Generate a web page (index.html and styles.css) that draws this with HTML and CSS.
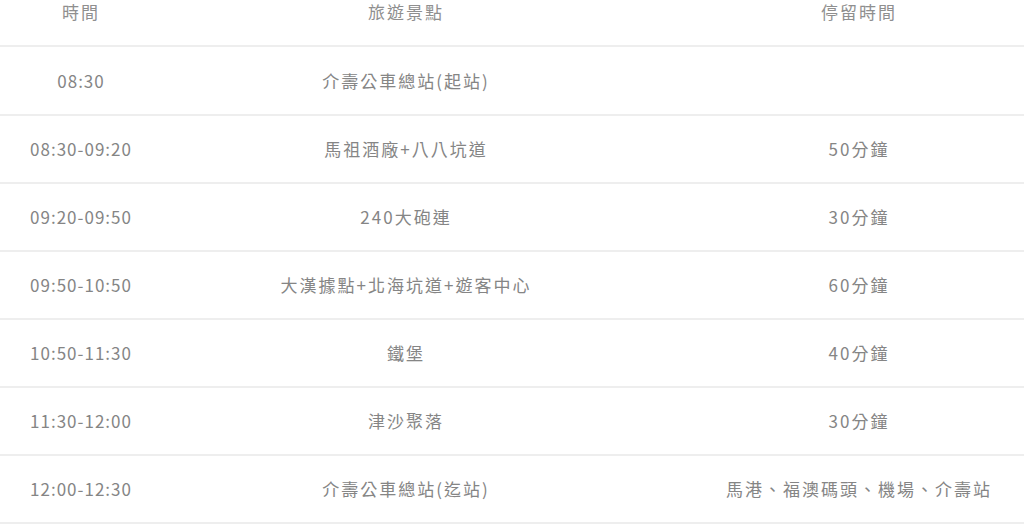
FILE: index.html
```html
<!DOCTYPE html>
<html lang="zh-Hant">
<head>
    <meta charset="UTF-8">
    <meta name="viewport" content="width=device-width, initial-scale=1.0">
    <title>行程表</title>
    <link rel="stylesheet" href="styles.css">
</head>
<body>
    <table class="schedule">
        <colgroup>
            <col class="col-time">
            <col class="col-spot">
            <col class="col-stay">
        </colgroup>
        <thead>
            <tr>
                <th>時間</th>
                <th>旅遊景點</th>
                <th class="stay">停留時間</th>
            </tr>
        </thead>
        <tbody>
            <tr>
                <td class="time">08:30</td>
                <td>介壽公車總站(起站)</td>
                <td class="stay"></td>
            </tr>
            <tr>
                <td class="time">08:30-09:20</td>
                <td>馬祖酒廠+八八坑道</td>
                <td class="stay">50分鐘</td>
            </tr>
            <tr>
                <td class="time">09:20-09:50</td>
                <td>240大砲連</td>
                <td class="stay">30分鐘</td>
            </tr>
            <tr>
                <td class="time">09:50-10:50</td>
                <td>大漢據點+北海坑道+遊客中心</td>
                <td class="stay">60分鐘</td>
            </tr>
            <tr>
                <td class="time">10:50-11:30</td>
                <td>鐵堡</td>
                <td class="stay">40分鐘</td>
            </tr>
            <tr>
                <td class="time">11:30-12:00</td>
                <td>津沙聚落</td>
                <td class="stay">30分鐘</td>
            </tr>
            <tr>
                <td class="time">12:00-12:30</td>
                <td>介壽公車總站(迄站)</td>
                <td class="stay">馬港、福澳碼頭、機場、介壽站</td>
            </tr>
        </tbody>
    </table>
</body>
</html>
```

FILE: styles.css
```css
* {
    box-sizing: border-box;
    margin: 0;
    padding: 0;
}

body {
    font-family: "Noto Sans CJK TC", "Noto Sans", sans-serif;
    background-color: #fff;
    color: #858585;
    overflow: hidden;
}

.schedule {
    width: 100%;
    border-collapse: collapse;
    table-layout: fixed;
}

.col-time {
    width: 162px;
}

.col-spot {
    width: 488px;
}

.schedule th,
.schedule td {
    text-align: center;
    font-size: 17px;
    font-weight: 400;
    letter-spacing: 2px;
    line-height: 26px;
    border-bottom: 2px solid #eee;
    white-space: nowrap;
}

.schedule th {
    height: 45px;
    padding: 0 0 21px;
    line-height: 24px;
    color: #8f8f8f;
    vertical-align: top;
}

.schedule td {
    height: 68px;
    vertical-align: middle;
}

.schedule tbody tr:first-child td {
    height: 69px;
}

.schedule .time {
    letter-spacing: 1px;
}

.schedule .stay {
    padding-left: 44px;
}
```
